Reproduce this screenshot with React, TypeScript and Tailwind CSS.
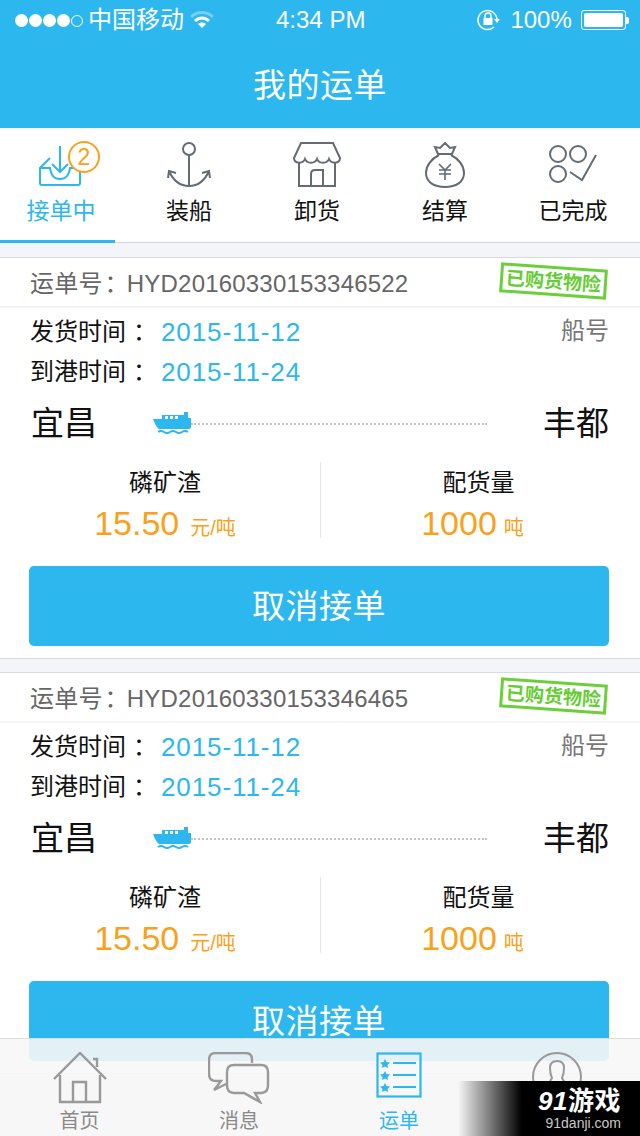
const sans = { fontFamily: '"Liberation Sans", "Noto Sans CJK SC", sans-serif' };

function InboxIcon() {
  return (
    <svg className="ml-[18px]" width="62" height="48" viewBox="0 0 62 48" fill="none" stroke="#2cb7ef" strokeWidth="2">
      <path d="M21 5 V31 M13 23 L21 31 L29 23" />
      <path d="M11 17 L1 27 V42 Q1 44 3 44 H39 Q41 44 41 42 V27 H31 C30 35 26 38 21 38 C16 38 12 35 11 27 H1" />
      <circle cx="45" cy="16" r="15" fill="#fff" stroke="#f9a11b" />
      <text x="45" y="24" textAnchor="middle" fontSize="23" fill="#f9a11b" stroke="none">
        2
      </text>
    </svg>
  );
}

function AnchorIcon() {
  return (
    <svg width="44" height="46" viewBox="0 0 44 46" fill="none" stroke="#636b75" strokeWidth="2">
      <circle cx="22" cy="7" r="6" />
      <path d="M22 13 V44 M2 29 C6 38 13 44 22 44 C31 44 38 38 42 29 M1 36 L2 29 L9 31 M43 36 L42 29 L35 31" />
    </svg>
  );
}

function ShopIcon() {
  return (
    <svg width="48" height="46" viewBox="0 0 48 46" fill="none" stroke="#636b75" strokeWidth="2">
      <path d="M8 1 H40 L47 16 C47 22 38 22 36 17 C34 22 26 22 24 17 C22 22 14 22 12 17 C10 22 1 22 1 16 Z" />
      <path d="M6 21 V44 H42 V21 M18 44 V32 Q18 28 22 28 H30 V44" />
    </svg>
  );
}

function MoneyBagIcon() {
  return (
    <svg width="40" height="46" viewBox="0 0 40 46" fill="none" stroke="#636b75" strokeWidth="2">
      <path d="M13 12 L10 5 L15 6 L20 1 L25 6 L30 5 L27 12 Z" />
      <path d="M14 13 C6 17 1 24 1 31 C1 40 9 45 20 45 C31 45 39 40 39 31 C39 24 34 17 26 13" />
      <path d="M14 22 L20 28 L26 22 M14 28 H26 M14 32 H26 M20 28 V38" strokeWidth="1.6" />
    </svg>
  );
}

function DoneIcon() {
  return (
    <svg width="48" height="40" viewBox="0 0 48 40" fill="none" stroke="#636b75" strokeWidth="2">
      <circle cx="9" cy="9" r="8" />
      <circle cx="29" cy="9" r="8" />
      <circle cx="9" cy="29" r="8" />
      <path d="M21 27 L33 35 L47 10" />
    </svg>
  );
}

function ShipIcon() {
  return (
    <svg width="38" height="24" viewBox="0 0 38 24" fill="#2cb7ef">
      <path d="M9 3 H31 V0 H35 V6 H38 V15 Q38 17 36 17 H6 Q3 15 0 7 H9 Z" />
      <path d="M12 4 H15 V7 H12 Z M17 4 H20 V7 H17 Z M22 4 H25 V7 H22 Z" fill="#fff" />
      <path d="M5 20 Q8 18 11 20 T17 20 T23 20 T29 20 T35 20" fill="none" stroke="#2cb7ef" strokeWidth="2" />
    </svg>
  );
}

function WifiIcon() {
  return (
    <svg width="24" height="20" viewBox="0 0 24 20" fill="none" stroke="#fff" strokeWidth="3">
      <path d="M1 7 C7 1 17 1 23 7" opacity="0.35" />
      <path d="M5 11 C9 7 15 7 19 11" />
      <path d="M12 18 L8 14 C10 12 14 12 16 14 Z" fill="#fff" stroke="none" />
    </svg>
  );
}

function RotationLockIcon() {
  return (
    <svg width="24" height="22" viewBox="0 0 24 22" fill="none" stroke="#fff" strokeWidth="1.5">
      <path d="M20 11 A9.5 9.5 0 1 0 17 18" />
      <path d="M17 10 H23 L20 14 Z" fill="#fff" stroke="none" />
      <rect x="6.5" y="9" width="9" height="7" fill="#fff" stroke="none" />
      <path d="M8 9 V7 A3 3 0 0 1 14 7 V9" />
    </svg>
  );
}

function HomeIcon() {
  return (
    <svg width="54" height="52" viewBox="0 0 54 52" fill="none" stroke="#999" strokeWidth="2.4">
      <path d="M1 27 L27 1 L53 27 M40 7 H44 V15" />
      <path d="M7 23 V50 H47 V23 M20 50 V30 H33 V50" />
    </svg>
  );
}

function MessagesIcon() {
  return (
    <svg width="62" height="52" viewBox="0 0 62 52" fill="none" stroke="#999" strokeWidth="2.4">
      <path d="M44 11 V7 Q44 1 37 1 H8 Q1 1 1 8 V22 Q1 29 8 29 H13 L6 38 L18 32" />
      <path d="M26 13 H53 Q60 13 60 20 V33 Q60 41 53 41 H47 L52 50 L36 41 H26 Q19 41 19 33 V20 Q19 13 26 13 Z" />
    </svg>
  );
}

function WaybillIcon() {
  return (
    <svg width="46" height="46" viewBox="0 0 46 46" fill="none" stroke="#2cb7ef" strokeWidth="2.2">
      <rect x="1.5" y="1.5" width="43" height="43" />
      <path d="M17 11 H40 M17 23 H40 M17 35 H40" />
      <g fill="#2cb7ef" stroke="none">
        <path d="M9 7 L10.5 10 L14 10.500 L11.500 13 L12 16 L9 14.500 L6 16 L6.500 13 L4 10.500 L7.500 10 Z" />
        <path d="M9 19 L10.5 22 L14 22.500 L11.500 25 L12 28 L9 26.500 L6 28 L6.500 25 L4 22.500 L7.500 22 Z" />
        <path d="M9 31 L10.5 34 L14 34.500 L11.500 37 L12 40 L9 38.500 L6 40 L6.500 37 L4 34.500 L7.500 34 Z" />
      </g>
    </svg>
  );
}

function ProfileIcon() {
  return (
    <svg width="50" height="50" viewBox="0 0 50 50" fill="none" stroke="#999" strokeWidth="2">
      <circle cx="25" cy="25" r="24" />
      <path d="M18 16 Q18 9 25 9 Q32 9 32 16 Q32 22 30 26 L33 31 H17 L20 26 Q18 22 18 16 Z" />
    </svg>
  );
}

const tabs = [
  { label: "接单中", icon: <InboxIcon />, active: true },
  { label: "装船", icon: <AnchorIcon />, active: false },
  { label: "卸货", icon: <ShopIcon />, active: false },
  { label: "结算", icon: <MoneyBagIcon />, active: false },
  { label: "已完成", icon: <DoneIcon />, active: false },
];

const waybills = ["HYD20160330153346522", "HYD20160330153346465"];

function Waybill({ no }: { no: string }) {
  return (
    <div className="bg-white border-y border-[#d8dbde] h-[402px] flex flex-col shrink-0">
      {/* Number row with the insurance stamp */}
      <div className="relative h-[50px] flex items-center pl-[30px] pt-[3px] border-b-2 border-[#f5f5f5] text-[24px] text-[#666] tracking-[0.2px]">
        运单号<span className="ml-[2px]">：</span>
        <span className="-ml-[2px]">{no}</span>
        <div className="absolute left-[500px] top-[8px] w-[107px] h-[30px] rotate-[4deg] border-[3px] border-[#6bcf3a] flex items-center justify-center text-[19px] leading-none font-bold text-[#66cc33] tracking-normal">
          已购货物险
        </div>
      </div>

      <div className="flex justify-between pl-[30px] pr-[31px] h-[40px] mt-[4px] items-center text-[24px] text-[#111]">
        <div className="flex items-center">
          发货时间<span className="ml-[7px]">：</span>
          <span className="text-[26px] tracking-[0.9px] text-[#2cb7ef] ml-[4px]">2015-11-12</span>
        </div>
        <span className="text-[#777] text-[24px] -mt-[2px]">船号</span>
      </div>
      <div className="flex pl-[30px] h-[40px] items-center text-[24px] text-[#111]">
        到港时间<span className="ml-[7px]">：</span>
        <span className="text-[26px] tracking-[0.9px] text-[#2cb7ef] ml-[4px]">2015-11-24</span>
      </div>

      {/* Route: origin, ship and destination */}
      <div className="flex items-center h-[64px] pl-[31px] pr-[31px] text-[33px] text-[#111]">
        <span className="w-[122px]">宜昌</span>
        <ShipIcon />
        <div className="w-[296px] border-t-2 border-dotted border-[#c4c4c4]" />
        <span className="ml-auto">丰都</span>
      </div>

      <div className="flex mt-[6px] h-[76px]">
        <div className="w-[321px] flex flex-col items-center border-r border-[#e6e6e6] pl-[10px] pt-[1px]">
          <span className="text-[24px] text-[#111] leading-[40px]">磷矿渣</span>
          <span className="text-[#f9a11b] leading-[40px] text-[34px]">
            15.50<span className="text-[20px] ml-[11px]">元/吨</span>
          </span>
        </div>
        <div className="w-[319px] flex flex-col items-center pr-[4px] pt-[1px]">
          <span className="text-[24px] text-[#111] leading-[40px]">配货量</span>
          <span className="text-[#f9a11b] leading-[40px] text-[34px] -ml-[12px]">
            1000<span className="text-[20px] ml-[7px]">吨</span>
          </span>
        </div>
      </div>

      <button className="ml-[29px] w-[580px] mt-[28px] h-[80px] rounded-[5px] bg-[#2cb7ef] text-white text-[33px] tracking-[0.5px] pt-[2px]">
        取消接单
      </button>
    </div>
  );
}

export default function App() {
  return (
    <div className="relative w-[640px] h-[1136px] overflow-hidden bg-[#f3f5f8]" style={sans}>
      <div className="bg-[#2cb7ef] text-white h-[128px]">
        {/* Status bar */}
        <div className="h-[40px] flex items-center pl-[15px] text-[24px] whitespace-nowrap">
          <div className="flex gap-[1px] shrink-0">
            {[0, 1, 2, 3].map((i) => (
              <span key={i} className="w-[13px] h-[13px] rounded-full bg-white" />
            ))}
            <span className="w-[12px] h-[12px] mt-[1px] rounded-full border border-white" />
          </div>
          <span className="ml-[5px]">中国移动</span>
          <span className="ml-[6px]">
            <WifiIcon />
          </span>
          <span className="ml-[62px]">4:34 PM</span>
          <span className="ml-[112px]">
            <RotationLockIcon />
          </span>
          <span className="ml-[9px]">100%</span>
          <div className="ml-[9px] w-[45px] h-[20px] shrink-0 rounded-[3px] border border-white p-[2px]">
            <div className="w-full h-full rounded-[2px] bg-white" />
          </div>
          <span className="w-[3px] h-[7px] shrink-0 bg-white rounded-r-[2px]" />
        </div>
        <div className="h-[88px] flex items-center justify-center text-[33px] pt-[3px] tracking-[0.5px]">
          我的运单
        </div>
      </div>

      {/* Status tabs */}
      <div className="relative h-[115px] bg-white border-b border-[#d3d6da] flex -ml-[3px] w-[643px]">
        {tabs.map((t) => (
          <div key={t.label} className="w-[128px] flex flex-col items-center">
            <div className="h-[50px] mt-[12px] flex items-center justify-center">{t.icon}</div>
            <span className={`text-[23px] leading-[30px] mt-[6px] ${t.active ? "text-[#2cb7ef]" : "text-[#111]"}`}>
              {t.label}
            </span>
          </div>
        ))}
        <div className="absolute left-0 bottom-[-1px] w-[118px] h-[3px] bg-[#2cb7ef]" />
      </div>

      <div className="flex flex-col gap-[13px] mt-[14px]">
        {waybills.map((no) => (
          <Waybill key={no} no={no} />
        ))}
      </div>

      {/* Bottom navigation floats over the list */}
      <div className="absolute left-0 right-0 bottom-0 h-[98px] bg-[#f7f7f7]/90 border-t border-[#dcdcdc] flex">
        <div className="w-[159px] flex flex-col items-center pt-[13px]">
          <HomeIcon />
          <span className="text-[20px] leading-[26px] text-[#8a8a8a] mt-[4px]">首页</span>
        </div>
        <div className="w-[160px] flex flex-col items-center pt-[13px]">
          <MessagesIcon />
          <span className="text-[20px] leading-[26px] text-[#8a8a8a] mt-[4px]">消息</span>
        </div>
        <div className="w-[160px] flex flex-col items-center pt-[13px]">
          <WaybillIcon />
          <span className="text-[20px] leading-[26px] text-[#2cb7ef] mt-[10px]">运单</span>
        </div>
        <div className="w-[155px] flex flex-col items-center pt-[13px]">
          <ProfileIcon />
        </div>
      </div>

      {/* Site watermark in the corner */}
      <div className="absolute right-0 bottom-0 w-[182px] h-[55px] bg-gradient-to-r from-transparent via-black via-[35%] to-black flex flex-col items-end pr-[19px] pt-[6px] text-white">
        <span className="text-[26px] leading-[28px] font-bold italic tracking-[0.5px]">
          91<span className="not-italic">游戏</span>
        </span>
        <span className="text-[14px] leading-[16px] text-[#c8c8c8]">91danji.com</span>
      </div>
    </div>
  );
}
